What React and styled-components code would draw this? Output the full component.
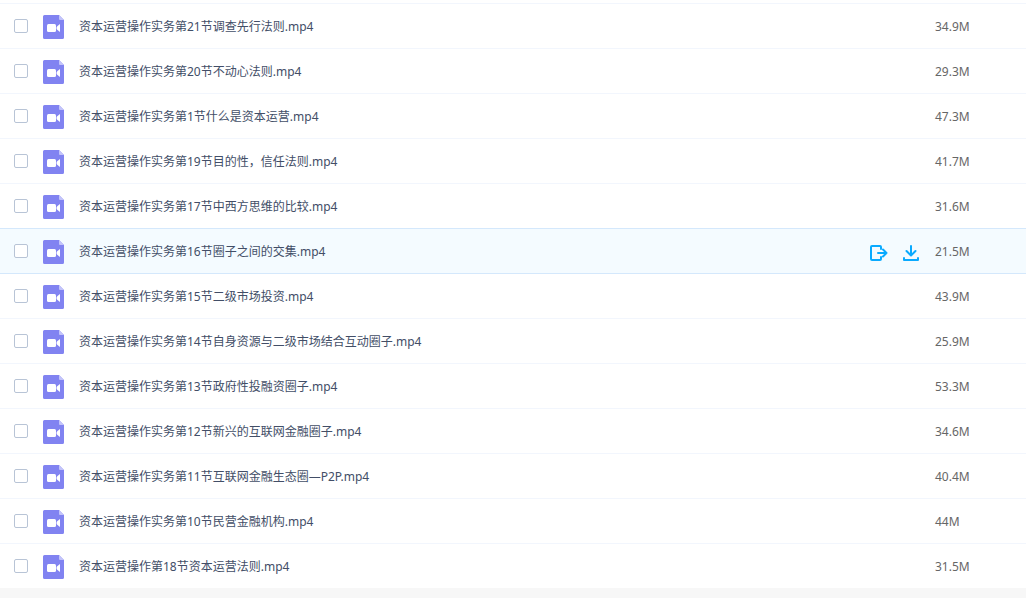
import React from "react";
import styled, { createGlobalStyle } from "styled-components";

const GlobalStyle = createGlobalStyle`
  *, *::before, *::after { box-sizing: border-box; }
  body {
    margin: 0;
    background: #f7f7f7;
    color: #424e67;
    font: 12px/18px "Noto Sans", "Noto Sans CJK SC", sans-serif;
  }
`;

const Panel = styled.main`
  padding-top: 3px;
  background: #fff;
`;

const FileTable = styled.table`
  width: 100%;
  table-layout: fixed;
  border-spacing: 0;
`;

const CheckColumn = styled.col`
  width: 43px;
`;

const ActionColumn = styled.col`
  width: 80px;
`;

const SizeColumn = styled.col`
  width: 91px;
`;

const Cell = styled.td`
  height: 45px;
  padding: 2px 0 0;
  border-top: 1px solid #f2f6fd;
  vertical-align: middle;
`;

const Row = styled.tr`
  background: ${({ $active }) => ($active ? "#f4fbff" : "#fff")};

  ${Cell} {
    border-color: ${({ $active, $afterActive }) =>
      $active || $afterActive ? "#d4e8fc" : "#f2f6fd"};
  }
`;

const CheckCell = styled(Cell)`
  padding: 0 0 0 14px;
`;

const SizeCell = styled(Cell)`
  color: #666;
`;

const Checkbox = styled.input.attrs({ type: "checkbox" })`
  appearance: none;
  display: block;
  width: 14px;
  height: 14px;
  margin: 0;
  border: 1px solid #b8c4d6;
  border-radius: 2px;
  background: #fff;

  &:checked {
    background: #09aaff;
    border-color: #09aaff;
  }
`;

const FileLabel = styled.label`
  display: flex;
  align-items: center;
  gap: 15px;
  white-space: nowrap;
`;

const FileIcon = styled.svg`
  display: block;
  flex: none;
  width: 21px;
  height: 24px;
`;

const Actions = styled.div`
  display: flex;
  gap: 12px;
  padding: 2px 0 0 14px;
`;

const ActionButton = styled.button`
  display: block;
  width: 20px;
  height: 20px;
  padding: 0;
  border: 0;
  background: none;
  color: #09aaff;
  cursor: pointer;

  svg {
    display: block;
    fill: none;
    stroke: currentColor;
    stroke-width: 2;
    stroke-linecap: round;
    stroke-linejoin: round;
  }
`;

const files = [
  ["资本运营操作实务第21节调查先行法则.mp4", "34.9M"],
  ["资本运营操作实务第20节不动心法则.mp4", "29.3M"],
  ["资本运营操作实务第1节什么是资本运营.mp4", "47.3M"],
  ["资本运营操作实务第19节目的性，信任法则.mp4", "41.7M"],
  ["资本运营操作实务第17节中西方思维的比较.mp4", "31.6M"],
  ["资本运营操作实务第16节圈子之间的交集.mp4", "21.5M"],
  ["资本运营操作实务第15节二级市场投资.mp4", "43.9M"],
  ["资本运营操作实务第14节自身资源与二级市场结合互动圈子.mp4", "25.9M"],
  ["资本运营操作实务第13节政府性投融资圈子.mp4", "53.3M"],
  ["资本运营操作实务第12节新兴的互联网金融圈子.mp4", "34.6M"],
  ["资本运营操作实务第11节互联网金融生态圈—P2P.mp4", "40.4M"],
  ["资本运营操作实务第10节民营金融机构.mp4", "44M"],
  ["资本运营操作第18节资本运营法则.mp4", "31.5M"],
];

const ACTIVE_ROW = 5;

function VideoFileIcon() {
  return (
    <FileIcon viewBox="0 0 21 24" aria-hidden="true">
      <path
        d="M1.500 0H16l5 5v17.500a1.500 1.500 0 0 1-1.500 1.500h-18A1.500 1.500 0 0 1 0 22.500v-21A1.500 1.500 0 0 1 1.500 0z"
        fill="#8183f1"
      />
      <path d="M16 0l5 5h-4a1 1 0 0 1-1-1z" fill="#c3c4fa" />
      <rect x="4" y="9" width="9" height="8" rx="1.500" fill="#fff" />
      <path d="M17 9v8l-2.500-2a2.500 2.500 0 0 1 0-4z" fill="#fff" />
    </FileIcon>
  );
}

function RowActions() {
  return (
    <Actions>
      <ActionButton type="button" aria-label="分享">
        <svg width="20" height="20" viewBox="0 0 20 20" aria-hidden="true">
          <path d="M12 6V4a1 1 0 0 0-1-1H3a1 1 0 0 0-1 1v12a1 1 0 0 0 1 1h8a1 1 0 0 0 1-1v-2" />
          <path d="M9 10h8.500M14 6.500l3.500 3.500-3.500 3.500" />
        </svg>
      </ActionButton>
      <ActionButton type="button" aria-label="下载">
        <svg width="20" height="20" viewBox="0 0 20 20" aria-hidden="true">
          <path d="M10 3v9M5.500 8l4.500 4.500L14.500 8" />
          <path d="M3 15v2h14v-2" />
        </svg>
      </ActionButton>
    </Actions>
  );
}

export default function App() {
  return (
    <>
      <GlobalStyle />
      <Panel>
        <FileTable aria-label="文件列表">
          <colgroup>
            <CheckColumn />
            <col />
            <ActionColumn />
            <SizeColumn />
          </colgroup>
          <tbody>
            {files.map(([name, size], index) => (
              <Row
                key={name}
                $active={index === ACTIVE_ROW}
                $afterActive={index === ACTIVE_ROW + 1}
              >
                <CheckCell>
                  <Checkbox id={`file-${index}`} />
                </CheckCell>
                <Cell>
                  <FileLabel htmlFor={`file-${index}`}>
                    <VideoFileIcon />
                    {name}
                  </FileLabel>
                </Cell>
                <Cell>{index === ACTIVE_ROW && <RowActions />}</Cell>
                <SizeCell>{size}</SizeCell>
              </Row>
            ))}
          </tbody>
        </FileTable>
      </Panel>
    </>
  );
}
